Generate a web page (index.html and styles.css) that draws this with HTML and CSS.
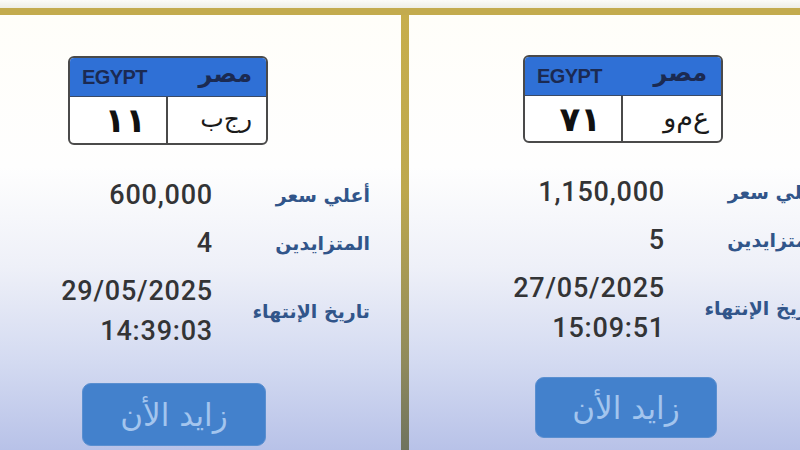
FILE: index.html
```html
<!DOCTYPE html>
<html lang="ar">
<head>
<meta charset="utf-8">
<title>مزاد اللوحات</title>
<link rel="stylesheet" href="styles.css">
</head>
<body>
<div class="top-strip"></div>
<div class="gold-rule"></div>
<div class="panels">
  <section class="panel panel--left">
    <div class="plate">
      <div class="plate-head">
        <span class="plate-en">EGYPT</span>
        <span class="plate-ar">مصر</span>
      </div>
      <div class="plate-body">
        <div class="plate-num">١١</div>
        <div class="plate-letters plate-letters--tight">ر‌ج‌ب</div>
      </div>
    </div>
    <div class="info">
      <div class="row">
        <div class="val">600,000</div>
        <div class="lab">أعلي سعر</div>
      </div>
      <div class="row">
        <div class="val">4</div>
        <div class="lab">المتزايدين</div>
      </div>
      <div class="row">
        <div class="val"><div>29/05/2025</div><div>14:39:03</div></div>
        <div class="lab">تاريخ الإنتهاء</div>
      </div>
    </div>
    <button class="bid">زايد الأن</button>
  </section>
  <div class="divider"></div>
  <section class="panel panel--right">
    <div class="plate">
      <div class="plate-head">
        <span class="plate-en">EGYPT</span>
        <span class="plate-ar">مصر</span>
      </div>
      <div class="plate-body">
        <div class="plate-num">٧١</div>
        <div class="plate-letters">ع‌م‌و</div>
      </div>
    </div>
    <div class="info">
      <div class="row">
        <div class="val">1,150,000</div>
        <div class="lab">أعلي سعر</div>
      </div>
      <div class="row">
        <div class="val">5</div>
        <div class="lab">المتزايدين</div>
      </div>
      <div class="row">
        <div class="val"><div>27/05/2025</div><div>15:09:51</div></div>
        <div class="lab">تاريخ الإنتهاء</div>
      </div>
    </div>
    <button class="bid">زايد الأن</button>
  </section>
</div>
</body>
</html>
```
FILE: styles.css
```css
html, body {
  margin: 0;
  padding: 0;
}
body {
  width: 800px;
  height: 450px;
  overflow: hidden;
  background: #b9c3e8;
  font-family: "DejaVu Sans", sans-serif;
}
.top-strip {
  height: 8px;
  background: linear-gradient(#fbfbf8, #eeeee6);
}
.gold-rule {
  height: 7px;
  background: #c3ab4e;
}
.panels {
  display: flex;
  margin-left: -44px;
  height: 435px;
}
.panel {
  flex: none;
  width: 445px;
  display: flex;
  flex-direction: column;
  background: linear-gradient(#fffef9 0, #fefefe 35%, #eef0f8 58%, #d3daf1 80%, #b8c2e8 100%);
}
.divider {
  flex: none;
  width: 8px;
  background: linear-gradient(#c7ae4c 0, #bda84e 40%, #8f8a5c 80%, #6f735e 100%);
}
.plate {
  margin-left: 112px;
  width: 200px;
  height: 89px;
  box-sizing: border-box;
  border: 2px solid #4a4a4a;
  border-radius: 6px;
  overflow: hidden;
  display: flex;
  flex-direction: column;
  background: #fff;
  direction: ltr;
}
.panel--left .plate { margin-top: 41px; }
.panel--right .plate { margin-top: 40px; margin-left: 114px; height: 88px; }
.plate-head {
  height: 38px;
  flex: none;
  background: #2f70d6;
  border-bottom: 1px solid #3a4a66;
  display: flex;
  align-items: center;
  justify-content: space-between;
  padding: 0 14px 0 12px;
  color: #1b2a52;
}
.plate-en {
  font-family: "Liberation Sans", Arial, sans-serif;
  font-weight: bold;
  font-size: 20px;
  letter-spacing: -0.6px;
}
.plate-ar {
  font-family: "DejaVu Sans", sans-serif;
  font-weight: bold;
  font-size: 24px;
  margin-top: -6px;
}
.plate-body {
  flex: 1;
  display: flex;
}
.plate-num {
  width: 98px;
  flex: none;
  border-right: 2px solid #4a4a4a;
  text-align: right;
  padding-right: 20px;
  box-sizing: border-box;
  font-family: "DejaVu Sans", sans-serif;
  font-weight: bold;
  font-size: 34px;
  line-height: 46px;
  color: #111;
}
.plate-letters {
  flex: 1;
  text-align: right;
  padding-right: 12px;
  font-family: "DejaVu Sans", sans-serif;
  font-size: 27px;
  line-height: 44px;
  color: #1a1a1a;
  direction: rtl;
}
.plate-letters--tight {
  font-size: 25px;
  letter-spacing: -2px;
  padding-right: 14px;
}
.info {
  display: flex;
  flex-direction: column;
  gap: 8px;
}
.panel--left .info { margin-top: 30px; }
.panel--right .info { margin-top: 29px; }
.row {
  display: grid;
  grid-template-columns: 257px 157px;
  align-items: center;
}
.panel--right .row { grid-template-columns: 256px 157px; }
.val {
  text-align: right;
  font-family: Roboto, "Liberation Sans", sans-serif;
  font-weight: 500;
  font-size: 27px;
  letter-spacing: 0.8px;
  line-height: 40px;
  color: #333436;
}
.lab {
  text-align: right;
  direction: rtl;
  font-family: "DejaVu Sans", sans-serif;
  font-weight: bold;
  font-size: 19px;
  color: #31558a;
  white-space: nowrap;
}
.bid {
  margin-left: 126px;
  width: 184px;
  border: 1px solid #5a8fd0;
  border-radius: 9px;
  background: #4381cc;
  color: #a3c5ee;
  font-family: "DejaVu Sans", sans-serif;
  font-size: 31px;
  padding: 0;
  direction: rtl;
}
.panel--left .bid { margin-top: 32px; height: 63px; }
.panel--right .bid { margin-top: 29px; height: 61px; margin-left: 126px; width: 182px; }
```
